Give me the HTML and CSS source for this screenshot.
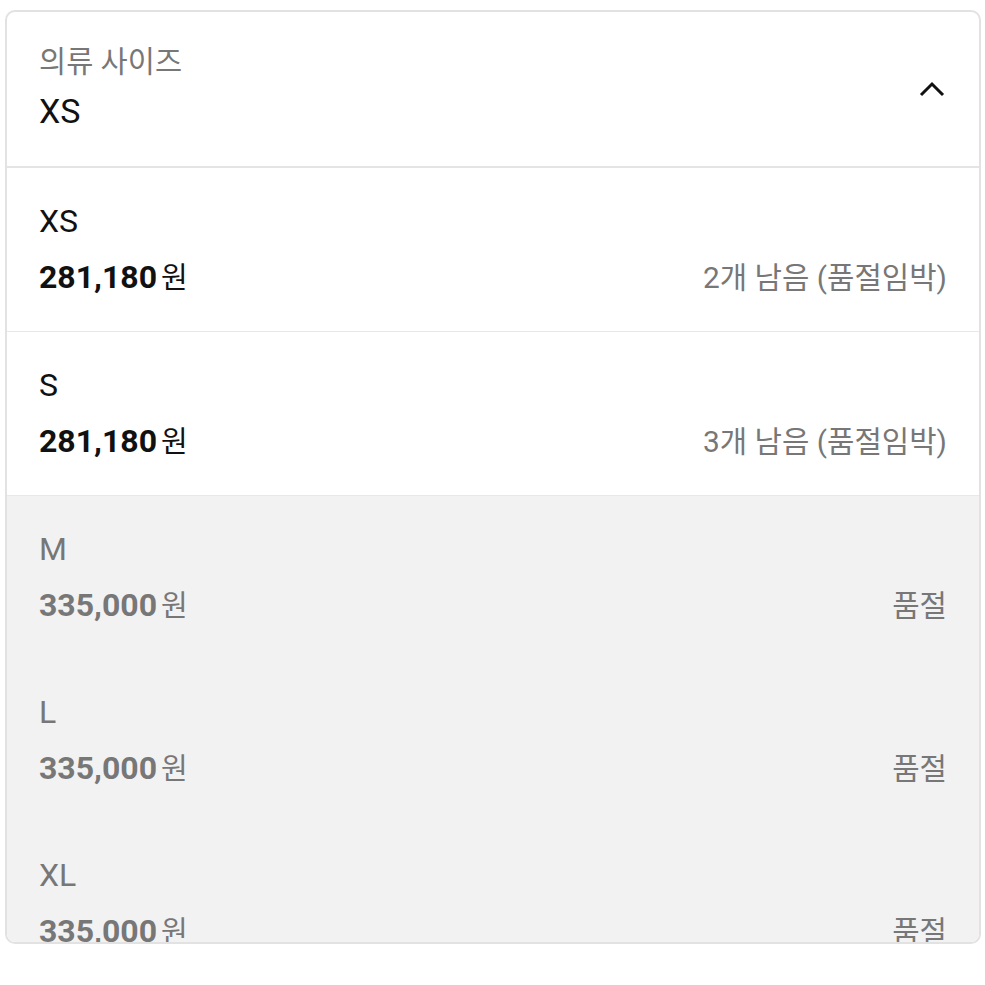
FILE: index.html
```html
<!DOCTYPE html>
<html lang="ko">
<head>
<meta charset="utf-8">
<link rel="stylesheet" href="styles.css">
</head>
<body>
<div class="card">
  <div class="header">
    <div class="header-text">
      <div class="label">의류 사이즈</div>
      <div class="value">XS</div>
    </div>
    <svg class="chevron" width="26" height="16" viewBox="0 0 26 16"><path d="M2 14 L13 3 L24 14" fill="none" stroke="#111" stroke-width="3"/></svg>
  </div>
  <div class="list">
    <div class="row">
      <div class="name">XS</div>
      <div class="line"><span class="price">281,180<span class="won">원</span></span><span class="stock">2개 남음 (품절임박)</span></div>
    </div>
    <div class="row">
      <div class="name">S</div>
      <div class="line"><span class="price">281,180<span class="won">원</span></span><span class="stock">3개 남음 (품절임박)</span></div>
    </div>
    <div class="row soldout">
      <div class="name">M</div>
      <div class="line"><span class="price">335,000<span class="won">원</span></span><span class="stock">품절</span></div>
    </div>
    <div class="row soldout">
      <div class="name">L</div>
      <div class="line"><span class="price">335,000<span class="won">원</span></span><span class="stock">품절</span></div>
    </div>
    <div class="row soldout">
      <div class="name">XL</div>
      <div class="line"><span class="price">335,000<span class="won">원</span></span><span class="stock">품절</span></div>
    </div>
  </div>
</div>
</body>
</html>
```
FILE: styles.css
```css
html, body {
  margin: 0;
  padding: 0;
  background: #fff;
}
body {
  font-family: Roboto, "Noto Sans CJK KR", sans-serif;
  color: #111;
}
.card {
  margin: 10px 4px 0 5px;
  height: 930px;
  border: 2px solid #e2e2e2;
  border-radius: 10px;
  overflow: hidden;
  background: #fff;
}
.header {
  display: flex;
  align-items: center;
  justify-content: space-between;
  padding: 32px 34px 35px 32px;
  border-bottom: 2px solid #e4e4e4;
}
.label {
  font-size: 29.5px;
  line-height: 36px;
  color: #777;
}
.value {
  margin-top: 11px;
  font-size: 34px;
  line-height: 40px;
  color: #111;
}
.chevron {
  display: block;
  margin-top: 2px;
}
.row {
  padding: 33px 32px 34px 32px;
  border-bottom: 1px solid #e8e8e8;
  background: #fff;
}
.row.soldout {
  background: #f2f2f2;
  border-bottom: none;
  color: #777;
}
.name {
  font-size: 32px;
  line-height: 40px;
}
.line {
  margin-top: 16px;
  height: 40px;
  display: flex;
  justify-content: space-between;
  align-items: baseline;
}
.price {
  font-size: 32px;
  line-height: 40px;
  font-weight: 700;
}
.won {
  font-weight: 400;
  font-size: 29px;
  margin-left: 4px;
}
.stock {
  font-size: 29.8px;
  line-height: 40px;
  color: #777;
}
```
